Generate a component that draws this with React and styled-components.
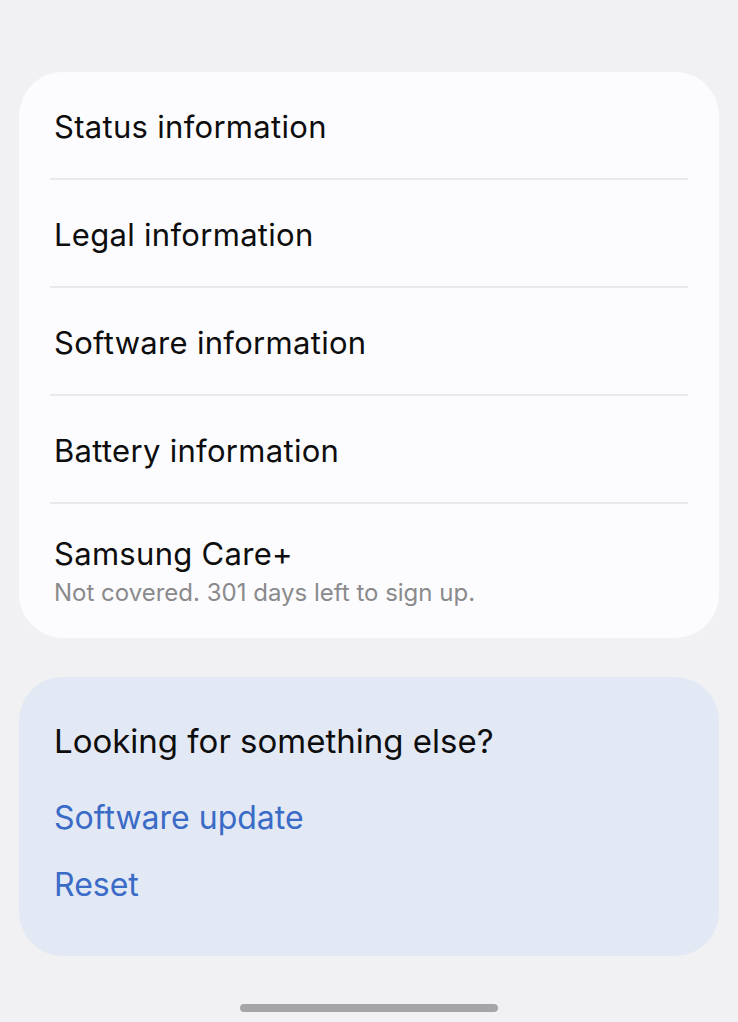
import styled, { createGlobalStyle } from 'styled-components';

const Global = createGlobalStyle`
  html, body {
    margin: 0;
    padding: 0;
    background: #f1f1f3;
  }
  body {
    font-family: Inter, Roboto, "Noto Sans", sans-serif;
    -webkit-font-smoothing: antialiased;
  }
`;

const Page = styled.div`
  width: 738px;
  height: 1022px;
  box-sizing: border-box;
  padding: 72px 19px 0;
  display: flex;
  flex-direction: column;
  overflow: hidden;
`;

const Card = styled.div`
  background: ${p => p.tint ? '#e2e8f4' : '#fcfcfe'};
  border-radius: 44px;
  overflow: hidden;
`;

const Row = styled.div`
  margin: 0 31px;
  height: ${p => p.tall ? '134px' : '108px'};
  box-sizing: border-box;
  display: flex;
  flex-direction: column;
  justify-content: center;
  border-bottom: ${p => p.last ? 'none' : '2px solid #e9e9eb'};
  padding: 0 4px;
  padding-top: ${p => p.tall ? '2px' : '3px'};
`;

const Title = styled.div`
  font-size: 31px;
  line-height: 36px;
  letter-spacing: 0.3px;
  color: #0d0d0d;
`;

const Sub = styled.div`
  font-size: 24px;
  line-height: 30px;
  color: #8a8a8c;
  margin-top: 6px;
`;

const Suggest = styled.div`
  padding: 46px 35px 53px;
  display: flex;
  flex-direction: column;
`;

const Heading = styled.div`
  font-size: 33px;
  line-height: 36px;
  color: #0d0d0d;
  margin-bottom: 41px;
`;

const Link = styled.a`
  font-size: 32px;
  line-height: 36px;
  color: #3a6bc7;
  text-decoration: none;
  & + & {
    margin-top: 31px;
  }
`;

const Gap = styled.div`
  height: 39px;
  flex: none;
`;

const NavArea = styled.div`
  flex: 1;
  display: flex;
  justify-content: center;
  align-items: flex-end;
  padding-bottom: 10px;
`;

const HomeBar = styled.div`
  width: 258px;
  height: 8px;
  border-radius: 4px;
  background: #a6a6a8;
`;

const items = [
  'Status information',
  'Legal information',
  'Software information',
  'Battery information',
];

export default function App() {
  return (
    <>
      <Global />
      <Page>
        <Card>
          {items.map(t => (
            <Row key={t}>
              <Title>{t}</Title>
            </Row>
          ))}
          <Row tall last>
            <Title>Samsung Care+</Title>
            <Sub>Not covered. 301 days left to sign up.</Sub>
          </Row>
        </Card>
        <Gap />
        <Card tint>
          <Suggest>
            <Heading>Looking for something else?</Heading>
            <Link>Software update</Link>
            <Link>Reset</Link>
          </Suggest>
        </Card>
        <NavArea>
          <HomeBar />
        </NavArea>
      </Page>
    </>
  );
}
